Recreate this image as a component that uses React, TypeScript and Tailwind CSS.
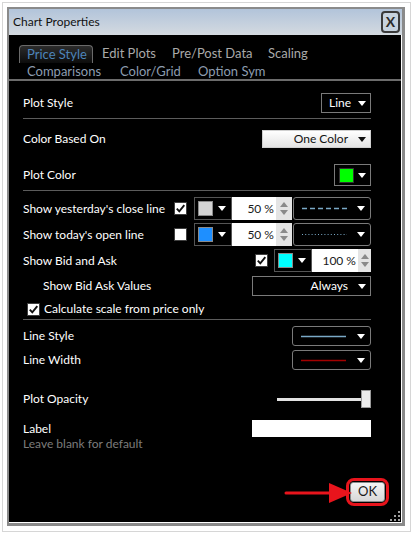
import type { ReactNode } from 'react';

// small white/black drop arrow
function Arrow({ dark = false }: { dark?: boolean }) {
  return (
    <svg width="8" height="5" viewBox="0 0 8 5" className={dark ? 'fill-[#111]' : 'fill-white'}>
      <path d="M0 0H8L4 5Z" />
    </svg>
  );
}

function Check({ on = false }: { on?: boolean }) {
  return (
    <span className="flex h-[13px] w-[13px] shrink-0 items-center justify-center border border-[#404040] bg-white">
      {on && (
        <svg width="11" height="11" viewBox="0 0 11 11">
          <path d="M1.8 5.6 4.3 8.3 9.3 2.2" stroke="#111" strokeWidth="1.9" fill="none" />
        </svg>
      )}
    </span>
  );
}

function Spinner({ w }: { w: string }) {
  return (
    <div className={`flex h-full ${w} flex-col items-center justify-center gap-[3px] bg-[#e4e4e4]`}>
      <svg width="8" height="5" viewBox="0 0 8 5" className="fill-[#8a8a8a]">
        <path d="M0 5H8L4 0Z" />
      </svg>
      <svg width="8" height="5" viewBox="0 0 8 5" className="fill-[#8a8a8a]">
        <path d="M0 0H8L4 5Z" />
      </svg>
    </div>
  );
}

function ColorPct({
  swatch,
  value,
  inputW,
  spinW,
}: {
  swatch: string;
  value: string;
  inputW: string;
  spinW: string;
}) {
  return (
    <div className="flex h-full">
      <div className="flex w-[38px] items-center justify-between border border-[#555] pl-[3px] pr-[5px]">
        <span className={`h-[15px] w-[15px] border border-[#8a8a8a] ${swatch}`} />
        <Arrow />
      </div>
      <div className={`flex ${inputW} items-center justify-end bg-white pr-[2px] text-[12px] text-[#1a1a1a]`}>
        {value}
      </div>
      <Spinner w={spinW} />
    </div>
  );
}

function LineDrop({ kind, w }: { kind: 'dash' | 'dot' | 'solid' | 'red'; w: string }) {
  const dash = kind === 'dash' ? '5 3' : kind === 'dot' ? '1 2.2' : undefined;
  const color = kind === 'red' ? '#a30000' : '#7aa9c6';
  return (
    <div className={`flex h-full ${w} items-center justify-between rounded-[3px] border border-[#7a7a7a] pl-[8px] pr-[5px]`}>
      <svg width="45" height="3" viewBox="0 0 45 3">
        <line x1="0" y1="1.5" x2="45" y2="1.5" stroke={color} strokeWidth={kind === 'dot' ? 1.2 : 1.6} strokeDasharray={dash} />
      </svg>
      <Arrow />
    </div>
  );
}

function Row({ label, className, children }: { label: ReactNode; className: string; children?: ReactNode }) {
  return (
    <div className={`flex items-center justify-between ${className}`}>
      <span className="text-[12px] text-white">{label}</span>
      {children}
    </div>
  );
}

const Sep = ({ className }: { className: string }) => <div className={`h-px bg-[#5c5c5c] ${className}`} />;

export default function App() {
  return (
    <div className="h-[534px] w-[413px] bg-white p-[2px] font-['Lato',sans-serif]">
      <div className="h-[530px] w-[409px] border border-[#d6d6d6] pl-[4px] pt-[4px]">
        {/* window */}
        <div className="h-[519px] w-[398px] border-b-[3px] border-l-2 border-r-[3px] border-t-2 border-[#8a8a8a]">
          <div className="flex h-full flex-col">
            {/* title bar */}
            <div className="flex h-[26px] items-center justify-between bg-gradient-to-b from-[#b2c4da] to-[#d4dae0] pl-[4px] pr-[2px]">
              <span className="text-[12px] text-[#111]">Chart Properties</span>
              <div className="flex h-[22px] w-[19px] items-center justify-center rounded-[4px] border-2 border-[#3a3a3a] bg-[#c6d2de] text-[14px] font-bold leading-none text-[#2a2a2a]">
                X
              </div>
            </div>

            {/* body */}
            <div className="relative flex-1 border-b border-r border-white bg-black">
              {/* tabs */}
              <div className="mt-[10px] flex h-[18px] items-center pl-[10px] text-[13px]">
                <div className="flex h-[18px] w-[74px] items-center rounded-t-[4px] border border-b-0 border-[#6a6a6a] bg-gradient-to-b from-[#2c2c2c] to-[#0c0c0c] pl-[7px] text-[#4d84b9]">
                  Price Style
                </div>
                <span className="ml-[9px] w-[70px] text-[#a9a9a9]">Edit Plots</span>
                <span className="w-[96px] text-[#a9a9a9]">Pre/Post Data</span>
                <span className="text-[#a9a9a9]">Scaling</span>
              </div>
              <div className="mt-[1px] flex h-[15px] items-center pl-[18px] text-[13px] text-[#8d9db0]">
                <span className="w-[93px]">Comparisons</span>
                <span className="w-[78px]">Color/Grid</span>
                <span>Option Sym</span>
              </div>
              <div className="h-[2px] bg-[#6c6c6c]" />

              <div className="ml-[14px] flex w-[348px] flex-col">
                <Row label="Plot Style" className="mt-[12px] h-[20px]">
                  <div className="flex h-full w-[50px] items-center justify-between border border-[#7a7a7a] pl-[7px] pr-[4px] text-[12px] text-white">
                    Line
                    <Arrow />
                  </div>
                </Row>
                <Sep className="mt-[5px]" />
                <Row label="Color Based On" className="mt-[11px] h-[18px]">
                  <div className="flex h-full w-[109px] items-center justify-end gap-[10px] border border-[#d0d0d0] bg-gradient-to-b from-white to-[#e4e4e4] pr-[4px] text-[12px] text-[#111]">
                    One Color
                    <Arrow dark />
                  </div>
                </Row>
                <Row label="Plot Color" className="mt-[16px] h-[22px]">
                  <div className="flex h-full w-[37px] items-center justify-between border border-[#7a7a7a] pl-[4px] pr-[4px]">
                    <span className="h-[15px] w-[15px] border border-[#333] bg-[#00ff00]" />
                    <Arrow />
                  </div>
                </Row>
                <Sep className="mt-[4px]" />

                <Row label="Show yesterday's close line" className="mt-[6px] h-[23px]">
                  <div className="flex h-full items-center">
                    <Check on />
                    <div className="ml-[7px] h-full">
                      <ColorPct swatch="bg-[#d3d3d3]" value="50 %" inputW="w-[44px]" spinW="w-[16px]" />
                    </div>
                    <div className="ml-px h-full">
                      <LineDrop kind="dash" w="w-[78px]" />
                    </div>
                  </div>
                </Row>
                <Row label="Show today's open line" className="mt-[3px] h-[23px]">
                  <div className="flex h-full items-center">
                    <Check />
                    <div className="ml-[7px] h-full">
                      <ColorPct swatch="bg-[#1e8fff]" value="50 %" inputW="w-[44px]" spinW="w-[16px]" />
                    </div>
                    <div className="ml-px h-full">
                      <LineDrop kind="dot" w="w-[78px]" />
                    </div>
                  </div>
                </Row>
                <Row label="Show Bid and Ask" className="mt-[3px] h-[23px]">
                  <div className="flex h-full items-center">
                    <Check on />
                    <div className="ml-[6px] h-full">
                      <ColorPct swatch="bg-[#00ffff]" value="100 %" inputW="w-[46px]" spinW="w-[13px]" />
                    </div>
                  </div>
                </Row>
                <Row label={<span className="pl-[20px]">Show Bid Ask Values</span>} className="mt-[4px] h-[20px]">
                  <div className="flex h-full w-[119px] items-center justify-end gap-[10px] border border-[#7a7a7a] pr-[4px] text-[12px] text-white">
                    Always
                    <Arrow />
                  </div>
                </Row>
                <div className="mt-[5px] flex h-[16px] items-center gap-[4px] pl-[4px] text-[12px] text-white">
                  <Check on />
                  Calculate scale from price only
                </div>
                <Sep className="mt-[2px]" />

                <Row label="Line Style" className="mt-[6px] h-[20px]">
                  <LineDrop kind="solid" w="w-[79px]" />
                </Row>
                <Row label="Line Width" className="mt-[4px] h-[20px]">
                  <LineDrop kind="red" w="w-[79px]" />
                </Row>

                <Row label="Plot Opacity" className="mt-[20px] h-[18px]">
                  <div className="flex h-full items-center">
                    <div className="h-[3px] w-[84px] bg-[#e2e2e2]" />
                    <div className="h-full w-[10px] border border-[#9a9a9a] bg-[#ececec]" />
                  </div>
                </Row>
                <Row label="Label" className="mt-[12px] h-[17px]">
                  <div className="h-full w-[119px] bg-white" />
                </Row>
                <div className="flex h-[14px] items-center text-[12px] text-[#7c7c7c]">Leave blank for default</div>
              </div>

              {/* OK */}
              <div className="mt-[27px] flex justify-end pr-[12px]">
                <div className="rounded-[8px] border-[3px] border-[#e8141c] p-px">
                  <div className="flex h-[20px] w-[35px] items-center justify-center rounded-[3px] border border-[#8a8a8a] bg-gradient-to-b from-[#f4f4f4] to-[#d8d8d8] text-[13px] text-[#1a1a1a]">
                    OK
                  </div>
                </div>
              </div>

              {/* annotation arrow */}
              <svg className="absolute left-[265px] top-[446px]" width="80" height="24" viewBox="0 0 80 24">
                <line x1="12" y1="12" x2="58" y2="12" stroke="#e8141c" strokeWidth="3" strokeLinecap="round" />
                <path d="M55 2 L78 12 L55 22 Z" fill="#e8141c" />
              </svg>

              {/* resize grip */}
              <svg className="absolute bottom-[1px] right-[1px]" width="10" height="10" viewBox="0 0 10 10" fill="#a0a0a0">
                <rect x="8" y="0" width="2" height="2" />
                <rect x="4" y="4" width="2" height="2" />
                <rect x="8" y="4" width="2" height="2" />
                <rect x="0" y="8" width="2" height="2" />
                <rect x="4" y="8" width="2" height="2" />
                <rect x="8" y="8" width="2" height="2" />
              </svg>
            </div>
          </div>
        </div>
      </div>
    </div>
  );
}
